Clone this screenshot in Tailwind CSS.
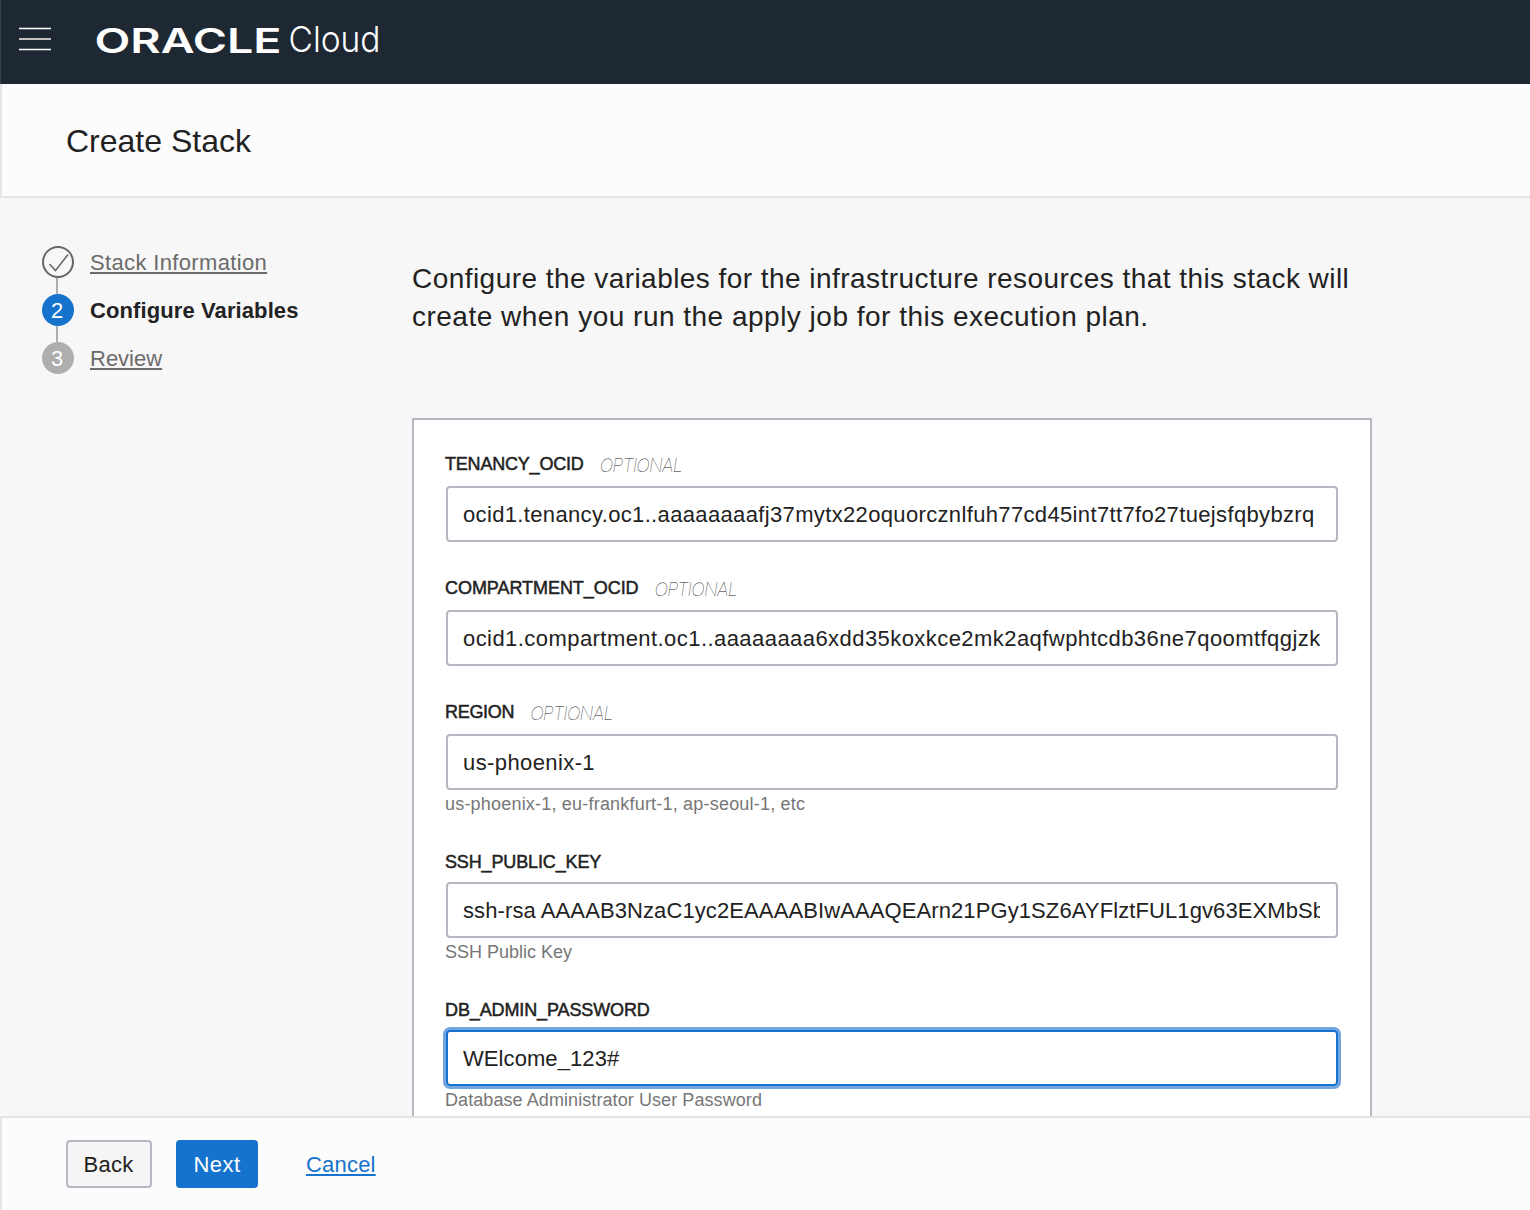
<!DOCTYPE html>
<html lang="en">
<head>
<meta charset="utf-8">
<title>Create Stack</title>
<script src="https://cdn.jsdelivr.net/npm/@tailwindcss/browser@4"></script>
</head>
<body class="font-['Liberation_Sans',Arial,sans-serif] text-[#222] bg-[#f7f7f7]">
<div class="flex flex-col w-[1530px] h-[1210px] overflow-hidden">
  <header class="flex items-center h-[84px] shrink-0 bg-[#1e2833] border-l border-[#37404b] pl-[18px] pb-[6px]">
    <svg class="w-8 h-6 shrink-0" viewBox="0 0 32 24" fill="none"><path d="M0 1.500h32M0 22.500h32" stroke="#fff" stroke-width="1.500"/><path d="M0 12h32" stroke="#c5c0c0" stroke-width="2"/></svg>
    <svg class="ml-11 w-[290px] h-[44px] overflow-visible" viewBox="95 17 290 44" fill="#fff">
      <text x="94.500" y="52.500" font-family="Inter" font-weight="600" font-size="34.500" textLength="187" lengthAdjust="spacingAndGlyphs">ORACLE</text>
      <text x="288.500" y="52" font-family="Inter" font-weight="300" font-size="35.500" textLength="92" lengthAdjust="spacingAndGlyphs">Cloud</text>
    </svg>
  </header>
  <div class="flex items-center h-[114px] shrink-0 bg-[#fcfcfc] border-l-2 border-b-2 border-[#e5e5e5] pl-16 pt-0.5">
    <h1 class="text-[32px] leading-[40px]">Create Stack</h1>
  </div>
  <main class="flex flex-1 min-h-0 overflow-hidden pl-[42px]">
    <nav class="w-[370px] shrink-0 pt-12 text-[22px] leading-8">
      <a class="flex items-center gap-4 h-8 text-[#6b6b6b]">
        <svg class="w-8 h-8" viewBox="0 0 32 32" fill="none" stroke="#666"><circle cx="16" cy="16" r="15" stroke-width="2"/><path d="M7.500 18l6 6.500 12.500-16" stroke-width="1.500"/></svg>
        <span class="pt-0.5 tracking-[0.35px] underline underline-offset-2 decoration-[1.5px]">Stack Information</span></a>
      <div class="w-0.5 h-4 ml-3.5 bg-[#aeaeae]"></div>
      <div class="flex items-center gap-4 h-8 font-bold"><span class="flex items-center justify-center w-8 h-8 rounded-full bg-[#1573cd] text-white font-normal pr-0.5 pt-0.5">2</span><span class="pt-0.5 tracking-[0.1px]">Configure Variables</span></div>
      <div class="w-0.5 h-4 ml-3.5 bg-[#aeaeae]"></div>
      <a class="flex items-center gap-4 h-8 text-[#6b6b6b]"><span class="flex items-center justify-center w-8 h-8 rounded-full bg-[#aeaeae] text-white pr-0.5 pt-0.5">3</span><span class="pt-0.5 underline underline-offset-2 decoration-[1.5px]">Review</span></a>
    </nav>
    <section class="w-[960px] shrink-0 pt-[62px]">
      <p class="text-[28px] leading-[38px] whitespace-nowrap"><span class="tracking-[0.45px]">Configure the variables for the infrastructure resources that this stack will</span><br><span class="tracking-[0.49px]">create when you run the apply job for this execution plan.</span></p>
      <form class="mt-[82px] h-[800px] bg-white border-2 border-[#b3b8c3] px-8 pt-[30px]">
        <div class="h-[124px]">
          <div class="flex items-center gap-4 h-9 pb-2 -ml-px text-[18px] leading-6"><label class="tracking-[-0.2px] [-webkit-text-stroke:0.5px]">TENANCY_OCID</label><em class="pt-1 font-['Inter'] font-thin tracking-[-0.8px]">OPTIONAL</em></div>
          <div class="flex items-center h-14 w-[892px] border-2 border-[#b3b8c3] rounded pl-[15px] pr-4 text-[22px]"><span class="w-full overflow-hidden whitespace-nowrap tracking-[0.35px]">ocid1.tenancy.oc1..aaaaaaaafj37mytx22oquorcznlfuh77cd45int7tt7fo27tuejsfqbybzrq</span></div>
        </div>
        <div class="h-[124px]">
          <div class="flex items-center gap-4 h-9 pb-2 -ml-px text-[18px] leading-6"><label class="tracking-[-0.05px] [-webkit-text-stroke:0.5px]">COMPARTMENT_OCID</label><em class="pt-1 font-['Inter'] font-thin tracking-[-0.8px]">OPTIONAL</em></div>
          <div class="flex items-center h-14 w-[892px] border-2 border-[#b3b8c3] rounded pl-[15px] pr-4 text-[22px]"><span class="w-full overflow-hidden whitespace-nowrap tracking-[0.44px]">ocid1.compartment.oc1..aaaaaaaa6xdd35koxkce2mk2aqfwphtcdb36ne7qoomtfqgjzk</span></div>
        </div>
        <div class="h-[148px]">
          <div class="flex items-center gap-4 h-9 pb-2 -ml-px text-[18px] leading-6"><label class="tracking-[-0.3px] [-webkit-text-stroke:0.5px]">REGION</label><em class="pt-1 font-['Inter'] font-thin tracking-[-0.8px]">OPTIONAL</em></div>
          <div class="flex items-center h-14 w-[892px] border-2 border-[#b3b8c3] rounded pl-[15px] pr-4 text-[22px]"><span class="tracking-[0.4px]">us-phoenix-1</span></div>
          <p class="-ml-px text-[18px] leading-7 text-[#767676] tracking-[0.2px]">us-phoenix-1, eu-frankfurt-1, ap-seoul-1, etc</p>
        </div>
        <div class="h-[148px]">
          <div class="flex items-center h-9 pb-1 -ml-px text-[18px] leading-6"><label class="tracking-[-0.14px] [-webkit-text-stroke:0.5px]">SSH_PUBLIC_KEY</label></div>
          <div class="flex items-center h-14 w-[892px] border-2 border-[#b3b8c3] rounded pl-[15px] pr-4 text-[22px]"><span class="w-full overflow-hidden whitespace-nowrap tracking-[0.1px]">ssh-rsa AAAAB3NzaC1yc2EAAAABIwAAAQEArn21PGy1SZ6AYFlztFUL1gv63EXMbSb</span></div>
          <p class="-ml-px text-[18px] leading-7 text-[#767676]">SSH Public Key</p>
        </div>
        <div class="h-[148px]">
          <div class="flex items-center h-9 pb-1 -ml-px text-[18px] leading-6"><label class="tracking-[-0.12px] [-webkit-text-stroke:0.5px]">DB_ADMIN_PASSWORD</label></div>
          <div class="flex items-center h-14 w-[892px] border-2 border-[#1573cd] ring-3 ring-[#73a6e1] rounded pl-[15px] pr-4 text-[22px]"><span class="tracking-[0.08px]">WElcome_123#</span></div>
          <p class="-ml-px text-[18px] leading-7 text-[#767676] tracking-[0.08px]">Database Administrator User Password</p>
        </div>
      </form>
    </section>
  </main>
  <footer class="flex h-[94px] shrink-0 bg-[#fcfcfc] border-l-2 border-t-2 border-[#e5e5e5] pl-16 pt-[22px] text-[22px]">
    <button class="w-[86px] h-12 border-2 border-[#b3b8c3] rounded bg-[#f5f5f5] tracking-[0.3px] pr-px">Back</button>
    <button class="w-[82px] h-12 ml-6 rounded bg-[#1573cd] text-white tracking-[0.4px]">Next</button>
    <a class="ml-12 pt-px leading-[48px] text-[#1573cd] tracking-[0.2px] underline underline-offset-2 decoration-2">Cancel</a>
  </footer>
</div>
</body>
</html>
